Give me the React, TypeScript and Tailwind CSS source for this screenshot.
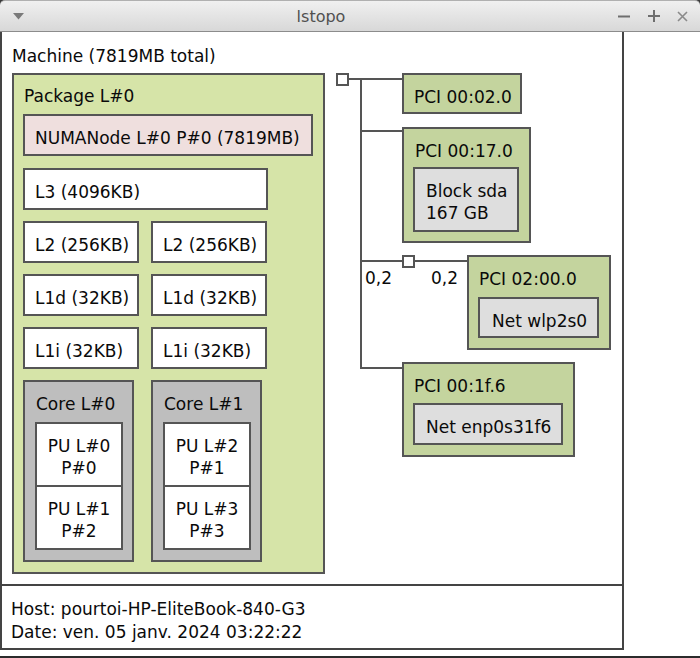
import React from "react";

function Cache({ label, w, bg = "bg-white" }: { label: string; w: string; bg?: string }) {
  return (
    <div className={`${w} h-[42px] shrink-0 border-2 border-[#555] ${bg} pl-[10px] pt-[11px] whitespace-nowrap`}>
      {label}
    </div>
  );
}

function Core({ name, pus }: { name: string; pus: [string, string][] }) {
  return (
    <div className="w-[111px] h-[182px] border-2 border-[#555] bg-[#bebebe] pt-[11px] pl-[10px] flex flex-col">
      <div className="pl-[1px] whitespace-nowrap">{name}</div>
      <div className="mt-[7px] flex flex-col">
        {pus.map(([a, b], i) => (
          <div
            key={a}
            className={`w-[88px] h-[65px] border-2 border-[#555] bg-white text-center pt-[11px] ${i > 0 ? "-mt-[2px]" : ""}`}
          >
            <div>{a}</div>
            <div>{b}</div>
          </div>
        ))}
      </div>
    </div>
  );
}

function Column({ core, pus }: { core: string; pus: [string, string][] }) {
  return (
    <div className="flex flex-col gap-[11px] w-[116px]">
      <Cache label="L2 (256KB)" w="w-[116px]" />
      <Cache label="L1d (32KB)" w="w-[116px]" />
      <Cache label="L1i (32KB)" w="w-[116px]" />
      <Core name={core} pus={pus} />
    </div>
  );
}

export default function App() {
  return (
    <div className="w-[700px] h-[658px] bg-white overflow-hidden flex flex-col font-['DejaVu_Sans',sans-serif] text-[17px] leading-[22px] text-[#0a0a0a]">
      {/* title bar */}
      <div className="h-[32px] shrink-0 bg-[#3b3b3b]">
        <div className="h-[32px] rounded-t-[5px] border-t border-[#b0b0b0] bg-gradient-to-b from-[#f0f0f0] to-[#d8d8d8] border-b border-b-[#8c8c8c] flex items-center">
          <svg className="ml-[13px] shrink-0" width="11" height="7" viewBox="0 0 11 7">
            <path d="M0 0H11L5.5 6.5Z" fill="#7a7a7a" />
          </svg>
          <div className="flex-1 text-center text-[16px] text-[#505050] pt-[1px]">lstopo</div>
          <svg className="shrink-0" width="12" height="12" viewBox="0 0 12 12">
            <path d="M0 6.5H12" stroke="#6e6e6e" strokeWidth="2" />
          </svg>
          <svg className="shrink-0 ml-[18px]" width="12" height="12" viewBox="0 0 12 12">
            <path d="M0 6H12M6 0V12" stroke="#6e6e6e" strokeWidth="2" />
          </svg>
          <svg className="shrink-0 ml-[17px] mr-[12px]" width="11" height="11" viewBox="0 0 11 11">
            <path d="M1 1L10 10M10 1L1 10" stroke="#8a8a8a" strokeWidth="1.6" />
          </svg>
        </div>
      </div>

      {/* content */}
      <div className="flex-1 flex">
        <div className="w-[624px] flex flex-col">
          {/* Machine */}
          <div className="h-[554px] border-l-2 border-r-2 border-b-2 border-[#444] pl-[8px] pt-[12px]">
            <div className="whitespace-nowrap pl-[2px] pt-[1px] h-[22px] box-content">Machine (7819MB total)</div>
            <div className="mt-[6px] flex items-start">
              {/* Package */}
              <div className="ml-[2px] w-[313px] h-[501px] shrink-0 border-2 border-[#555] bg-[#d6e4a8] pl-[9px] pt-[10px] flex flex-col">
                <div className="whitespace-nowrap pl-[1px]">Package L#0</div>
                <div className="mt-[7px]">
                  <Cache label="NUMANode L#0 P#0 (7819MB)" w="w-[290px]" bg="bg-[#efdfde]" />
                </div>
                <div className="mt-[12px]">
                  <Cache label="L3 (4096KB)" w="w-[245px]" />
                </div>
                <div className="mt-[11px] flex gap-[12px]">
                  <Column core="Core L#0" pus={[["PU L#0", "P#0"], ["PU L#1", "P#2"]]} />
                  <Column core="Core L#1" pus={[["PU L#2", "P#1"], ["PU L#3", "P#3"]]} />
                </div>
              </div>

              {/* IO tree */}
              <div className="relative ml-[11px] w-[276px] h-[390px] shrink-0">
                <div className="absolute left-0 top-0 w-[13px] h-[13px] border-2 border-[#555] bg-white" />
                <div className="absolute left-[13px] top-[5px] w-[53px] h-[2px] bg-[#555]" />
                <div className="absolute left-[24px] top-[5px] w-[2px] h-[291px] bg-[#555]" />
                <div className="absolute left-[24px] top-[57px] w-[42px] h-[2px] bg-[#555]" />
                <div className="absolute left-[24px] top-[187px] w-[42px] h-[2px] bg-[#555]" />
                <div className="absolute left-[24px] top-[294px] w-[42px] h-[2px] bg-[#555]" />
                <div className="absolute left-[66px] top-[182px] w-[13px] h-[13px] border-2 border-[#555] bg-white" />
                <div className="absolute left-[79px] top-[187px] w-[52px] h-[2px] bg-[#555]" />
                <span className="absolute left-[29px] top-[194px]">0,2</span>
                <span className="absolute left-[95px] top-[194px]">0,2</span>

                <div className="absolute left-[66px] top-0 w-[120px] h-[41px] border-2 border-[#555] bg-[#c4d49e] pl-[10px] pt-[11px] whitespace-nowrap">
                  PCI 00:02.0
                </div>

                <div className="absolute left-[66px] top-[54px] w-[129px] h-[116px] border-2 border-[#555] bg-[#c4d49e] pl-[9px] pt-[11px] flex flex-col">
                  <div className="whitespace-nowrap pl-[2px]">PCI 00:17.0</div>
                  <div className="mt-[5px] w-[106px] h-[65px] border-2 border-[#555] bg-[#dedede] pl-[11px] pt-[11px] whitespace-nowrap">
                    <div>Block sda</div>
                    <div>167 GB</div>
                  </div>
                </div>

                <div className="absolute left-[131px] top-[182px] w-[144px] h-[95px] border-2 border-[#555] bg-[#c4d49e] pl-[9px] pt-[11px] flex flex-col">
                  <div className="whitespace-nowrap pl-[1px]">PCI 02:00.0</div>
                  <div className="mt-[7px] w-[121px] h-[41px] border-2 border-[#555] bg-[#dedede] pl-[12px] pt-[11px] whitespace-nowrap">
                    Net wlp2s0
                  </div>
                </div>

                <div className="absolute left-[66px] top-[289px] w-[173px] h-[95px] border-2 border-[#555] bg-[#c4d49e] pl-[9px] pt-[11px] flex flex-col">
                  <div className="whitespace-nowrap pl-[1px]">PCI 00:1f.6</div>
                  <div className="mt-[6px] w-[150px] h-[42px] border-2 border-[#555] bg-[#dedede] pl-[11px] pt-[11px] whitespace-nowrap">
                    Net enp0s31f6
                  </div>
                </div>
              </div>
            </div>
          </div>

          {/* Legend */}
          <div className="h-[64px] border-l-2 border-r-2 border-b-2 border-[#444] pl-[9px] pt-[12px] leading-[23px] whitespace-nowrap">
            <div>Host: pourtoi-HP-EliteBook-840-G3</div>
            <div>Date: ven. 05 janv. 2024 03:22:22</div>
          </div>
        </div>
      </div>
      <div className="h-[2px] shrink-0 bg-[#2b2b2b]" />
    </div>
  );
}
